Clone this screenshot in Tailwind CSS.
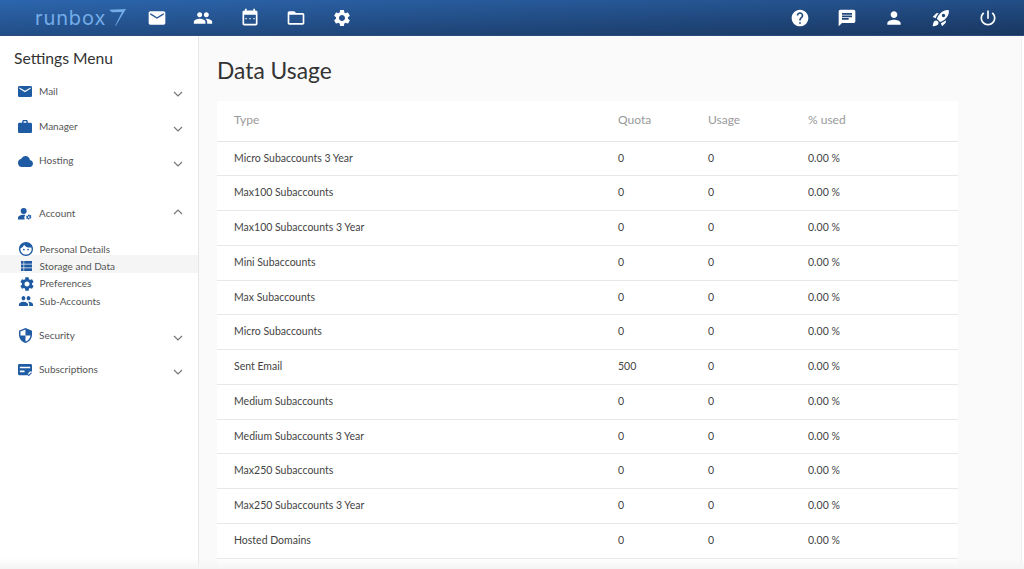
<!DOCTYPE html>
<html lang="en">
<head>
    <meta charset="UTF-8">
    <meta name="viewport" content="width=device-width, initial-scale=1.0">
    <title>Runbox - Data Usage</title>
    <script src="https://cdn.jsdelivr.net/npm/@tailwindcss/browser@4"></script>
</head>
<body class="relative h-[569px] overflow-hidden bg-[#fafafa] font-['Lato','Noto_Sans',sans-serif] text-[#333]">
    <!-- top toolbar -->
    <header class="flex h-[36px] items-center justify-between bg-gradient-to-br from-[#2c66ae] to-[#193761] border-b border-[#2b4d7c]">
        <div class="flex items-center">
            <a href="#" class="ml-[35px] flex w-[112px] items-center">
                <span class="text-[20px] leading-none tracking-[0.9px] text-[#74ace8] font-['Inter','Lato',sans-serif] font-normal">runbox</span>
                <svg class="ml-[3px] h-[17px] w-[17px]" viewBox="0 0 17 17" fill="#74ace8"><path d="M0 .8L17 0 6.6 17l-.5-.2L13 3 3 3.2z"/></svg>
            </a>
            <nav class="flex items-center gap-[26.3px] text-white">
                <svg class="h-[20px] w-[20px]" viewBox="0 0 24 24" fill="currentColor"><path d="M20 4H4c-1.1 0-2 .9-2 2v12c0 1.1.9 2 2 2h16c1.1 0 2-.9 2-2V6c0-1.1-.9-2-2-2zm0 4l-8 5-8-5V6l8 5 8-5v2z"/></svg>
                <svg class="h-[20px] w-[20px]" viewBox="0 0 24 24" fill="currentColor"><path d="M16 11c1.66 0 2.99-1.34 2.99-3S17.66 5 16 5c-1.66 0-3 1.34-3 3s1.34 3 3 3zm-8 0c1.66 0 2.99-1.34 2.99-3S9.66 5 8 5C6.34 5 5 6.34 5 8s1.34 3 3 3zm0 2c-2.33 0-7 1.17-7 3.5V19h14v-2.5c0-2.33-4.67-3.5-7-3.5zm8 0c-.29 0-.62.02-.97.05 1.16.84 1.97 1.97 1.97 3.45V19h6v-2.5c0-2.33-4.67-3.5-7-3.5z"/></svg>
                <svg class="h-[20px] w-[20px]" viewBox="0 0 24 24" fill="currentColor"><path d="M19 3h-1V1h-2v2H8V1H6v2H5c-1.1 0-2 .9-2 2v14c0 1.1.9 2 2 2h14c1.1 0 2-.9 2-2V5c0-1.1-.9-2-2-2zm0 16H5V8h14v11zM8 12H6.5v1.5H8V12zm4.75 0h-1.5v1.5h1.5V12zm4.75 0H16v1.5h1.5V12z"/></svg>
                <svg class="h-[20px] w-[20px]" viewBox="0 0 24 24" fill="currentColor"><path d="M20 6h-8l-2-2H4c-1.1 0-1.99.9-1.99 2L2 18c0 1.1.9 2 2 2h16c1.1 0 2-.9 2-2V8c0-1.1-.9-2-2-2zm0 12H4V8h16v10z"/></svg>
                <svg class="h-[20px] w-[20px]" viewBox="0 0 24 24" fill="currentColor"><path d="M19.14 12.94c.04-.3.06-.61.06-.94 0-.32-.02-.64-.07-.94l2.03-1.58c.18-.14.23-.41.12-.61l-1.92-3.32c-.12-.22-.37-.29-.59-.22l-2.39.96c-.5-.38-1.03-.7-1.62-.94l-.36-2.54c-.04-.24-.24-.41-.48-.41h-3.84c-.24 0-.43.17-.47.41l-.36 2.54c-.59.24-1.13.57-1.62.94l-2.39-.96c-.22-.08-.47 0-.59.22L2.74 8.87c-.12.21-.08.47.12.61l2.03 1.58c-.05.3-.09.63-.09.94s.02.64.07.94l-2.03 1.58c-.18.14-.23.41-.12.61l1.92 3.32c.12.22.37.29.59.22l2.39-.96c.5.38 1.03.7 1.62.94l.36 2.54c.05.24.24.41.48.41h3.84c.24 0 .44-.17.47-.41l.36-2.54c.59-.24 1.13-.56 1.62-.94l2.39.96c.22.08.47 0 .59-.22l1.92-3.32c.12-.22.07-.47-.12-.61l-2.01-1.58zM12 15.6c-1.98 0-3.6-1.62-3.6-3.6s1.62-3.6 3.6-3.6 3.6 1.62 3.6 3.6-1.62 3.6-3.6 3.6z"/></svg>
            </nav>
        </div>
        <div class="mr-[26px] flex items-center gap-[27px] text-white">
            <svg class="-ml-[1px] h-[20px] w-[20px]" viewBox="0 0 24 24" fill="currentColor"><path d="M12 2C6.48 2 2 6.48 2 12s4.48 10 10 10 10-4.48 10-10S17.52 2 12 2zm1 17h-2v-2h2v2zm2.07-7.75l-.9.92C13.45 12.9 13 13.5 13 15h-2v-.5c0-1.1.45-2.1 1.17-2.83l1.24-1.26c.37-.36.59-.86.59-1.41 0-1.1-.9-2-2-2s-2 .9-2 2H8c0-2.21 1.79-4 4-4s4 1.79 4 4c0 .88-.36 1.68-.93 2.25z"/></svg>
            <svg class="h-[20px] w-[20px]" viewBox="0 0 24 24" fill="currentColor"><path d="M20 2H4c-1.1 0-1.99.9-1.99 2L2 22l4-4h14c1.1 0 2-.9 2-2V4c0-1.1-.9-2-2-2zM6 9h12v2H6V9zm8 5H6v-2h8v2zm4-6H6V6h12v2z"/></svg>
            <svg class="h-[20px] w-[20px]" viewBox="0 0 24 24" fill="currentColor"><path d="M12 12c2.21 0 4-1.79 4-4s-1.79-4-4-4-4 1.79-4 4 1.79 4 4 4zm0 2c-2.67 0-8 1.34-8 4v2h16v-2c0-2.66-5.33-4-8-4z"/></svg>
            <svg class="h-[20px] w-[20px]" viewBox="0 0 24 24" fill="currentColor"><path d="M9.19 6.35c-2.04 2.29-3.44 5.58-3.57 5.89L2 10.69l4.05-4.05c.47-.47 1.15-.68 1.81-.55l1.33.26zM11.17 17s3.74-1.55 5.89-3.7c5.4-5.4 4.5-9.62 4.21-10.57-.95-.3-5.17-1.19-10.57 4.21C8.55 9.09 7 12.83 7 12.83L11.17 17zm6.48-2.19c-2.29 2.04-5.58 3.44-5.89 3.57L13.31 22l4.05-4.05c.47-.47.68-1.15.55-1.81l-.26-1.33zM9 18c0 .83-.34 1.58-.88 2.12C6.94 21.3 2 22 2 22s.7-4.94 1.88-6.12C4.42 15.34 5.17 15 6 15c1.66 0 3 1.34 3 3zm4-9c0-1.1.9-2 2-2s2 .9 2 2-.9 2-2 2-2-.9-2-2z"/></svg>
            <svg class="h-[20px] w-[20px]" viewBox="0 0 24 24" fill="currentColor"><path d="M13 3h-2v10h2V3zm4.83 2.17l-1.42 1.42C17.99 7.86 19 9.81 19 12c0 3.87-3.13 7-7 7s-7-3.13-7-7c0-2.19 1.01-4.14 2.58-5.42L6.17 5.17C4.23 6.82 3 9.26 3 12c0 4.97 4.03 9 9 9s9-4.03 9-9c0-2.74-1.23-5.18-3.17-6.83z"/></svg>
        </div>
    </header>

    <div class="flex h-[533px]">
        <!-- settings menu -->
        <aside class="w-[199px] shrink-0 border-r border-[#e6e6e6] bg-white">
            <h2 class="ml-[14px] mt-[12px] h-[20px] text-[15.7px] leading-[20px] text-[#333]">Settings Menu</h2>

            <div class="mt-[16px] flex h-[35px] items-start pl-[18px] pr-[15px] text-[#1f5ba3]">
                <svg class="mt-[2px] h-[11px] w-[14px]" viewBox="2 4 20 16" preserveAspectRatio="none" fill="currentColor"><path d="M20 4H4c-1.1 0-2 .9-2 2v12c0 1.1.9 2 2 2h16c1.1 0 2-.9 2-2V6c0-1.1-.9-2-2-2zm0 4l-8 5-8-5V6l8 5 8-5v2z"/></svg>
                <span class="ml-[7px] flex-1 text-[10px] leading-[14px] text-[#555]">Mail</span>
                <svg class="mt-[5px] h-[10px] w-[10px] text-[#777]" viewBox="0 0 10 10" fill="none" stroke="currentColor" stroke-width="1.2"><path d="M1 3l4 4 4-4"/></svg>
            </div>
            <div class="flex h-[34px] items-start pl-[18px] pr-[15px] text-[#1f5ba3]">
                <svg class="mt-[1px] h-[13px] w-[14px]" viewBox="2 2 20 19" preserveAspectRatio="none" fill="currentColor"><path d="M20 6h-4V4c0-1.11-.89-2-2-2h-4c-1.11 0-2 .89-2 2v2H4c-1.11 0-1.99.89-1.99 2L2 19c0 1.11.89 2 2 2h16c1.11 0 2-.89 2-2V8c0-1.11-.89-2-2-2zm-6 0h-4V4h4v2z"/></svg>
                <span class="ml-[7px] flex-1 text-[10px] leading-[14px] text-[#555]">Manager</span>
                <svg class="mt-[5px] h-[10px] w-[10px] text-[#777]" viewBox="0 0 10 10" fill="none" stroke="currentColor" stroke-width="1.2"><path d="M1 3l4 4 4-4"/></svg>
            </div>
            <div class="flex h-[53px] items-start pl-[17.5px] pr-[15px] text-[#1f5ba3]">
                <svg class="mt-[3px] h-[11px] w-[15px]" viewBox="0 4 24 16" preserveAspectRatio="none" fill="currentColor"><path d="M19.35 10.04C18.67 6.59 15.64 4 12 4 9.11 4 6.6 5.64 5.35 8.04 2.34 8.36 0 10.91 0 14c0 3.31 2.69 6 6 6h13c2.76 0 5-2.24 5-5 0-2.64-2.05-4.78-4.65-4.96z"/></svg>
                <span class="ml-[6.5px] flex-1 text-[10px] leading-[14px] text-[#555]">Hosting</span>
                <svg class="mt-[5.5px] h-[10px] w-[10px] text-[#777]" viewBox="0 0 10 10" fill="none" stroke="currentColor" stroke-width="1.2"><path d="M1 3l4 4 4-4"/></svg>
            </div>
            <div class="flex h-[32px] items-start pl-[18px] pr-[15px] text-[#1f5ba3]">
                <svg class="mt-[2px] h-[12px] w-[14px]" viewBox="0 0 16 14" preserveAspectRatio="none" fill="currentColor"><circle cx="6.5" cy="3.5" r="3.4"/><path d="M0 13.5v-2C0 9.2 3.5 8 6.5 8c.6 0 1.2.05 1.8.15a5 5 0 0 0-.7 5.35z"/><path fill-rule="evenodd" d="M13 7.5l.35 1.25 1.2-.5.8 1.1-.9.9.9.9-.8 1.1-1.2-.5L13 13.5h-1.4l-.35-1.25-1.2.5-.8-1.1.9-.9-.9-.9.8-1.1 1.2.5.35-1.35zm-.7 2.2a.95.95 0 1 0 0 1.9.95.95 0 0 0 0-1.9z"/></svg>
                <span class="ml-[7px] flex-1 text-[10px] leading-[14px] text-[#555]">Account</span>
                <svg class="mt-[1px] h-[10px] w-[10px] text-[#777]" viewBox="0 0 10 10" fill="none" stroke="currentColor" stroke-width="1.2"><path d="M1 7l4-4 4 4"/></svg>
            </div>

            <div class="box-border flex h-[17.3px] items-center pl-[19px] pt-[5px] text-[#1f5ba3]">
                <svg class="h-[14px] w-[14px]" viewBox="2 2 20 20" fill="currentColor"><path d="M9 11.75c-.69 0-1.25.56-1.25 1.25s.56 1.25 1.25 1.25 1.25-.56 1.25-1.25-.56-1.25-1.25-1.25zm6 0c-.69 0-1.25.56-1.25 1.25s.56 1.25 1.25 1.25 1.25-.56 1.25-1.25-.56-1.25-1.25-1.25zM12 2C6.48 2 2 6.48 2 12s4.48 10 10 10 10-4.48 10-10S17.52 2 12 2zm0 18c-4.41 0-8-3.59-8-8 0-.29.02-.58.05-.86 2.36-1.05 4.23-2.98 5.21-5.37C11.07 8.33 14.05 10 17.42 10c.78 0 1.53-.09 2.25-.26.21.71.33 1.47.33 2.26 0 4.41-3.59 8-8 8z"/></svg>
                <span class="ml-[6.5px] text-[10px] text-[#555]">Personal Details</span>
            </div>
            <div class="box-border flex h-[17.3px] items-center bg-[#f5f5f5] pl-[20.5px] pt-[5px] text-[#1f5ba3]">
                <svg class="h-[10px] w-[11.5px]" viewBox="3 5 18 14" preserveAspectRatio="none" fill="currentColor"><path d="M3 14h4v-4H3v4zm0 5h4v-4H3v4zM3 9h4V5H3v4zm5 5h13v-4H8v4zm0 5h13v-4H8v4zM8 5v4h13V5H8z"/></svg>
                <span class="ml-[7.5px] text-[10px] text-[#555]">Storage and Data</span>
            </div>
            <div class="box-border flex h-[17.3px] items-center pl-[19.5px] pt-[5px] text-[#1f5ba3]">
                <svg class="h-[14px] w-[14px]" viewBox="2 2 20 20" fill="currentColor"><path d="M19.14 12.94c.04-.3.06-.61.06-.94 0-.32-.02-.64-.07-.94l2.03-1.58c.18-.14.23-.41.12-.61l-1.92-3.32c-.12-.22-.37-.29-.59-.22l-2.39.96c-.5-.38-1.03-.7-1.62-.94l-.36-2.54c-.04-.24-.24-.41-.48-.41h-3.84c-.24 0-.43.17-.47.41l-.36 2.54c-.59.24-1.13.57-1.62.94l-2.39-.96c-.22-.08-.47 0-.59.22L2.74 8.87c-.12.21-.08.47.12.61l2.03 1.58c-.05.3-.09.63-.09.94s.02.64.07.94l-2.03 1.58c-.18.14-.23.41-.12.61l1.92 3.32c.12.22.37.29.59.22l2.39-.96c.5.38 1.03.7 1.62.94l.36 2.54c.05.24.24.41.48.41h3.84c.24 0 .44-.17.47-.41l.36-2.54c.59-.24 1.13-.56 1.62-.94l2.39.96c.22.08.47 0 .59-.22l1.92-3.32c.12-.22.07-.47-.12-.61l-2.01-1.58zM12 15.6c-1.98 0-3.6-1.62-3.6-3.6s1.62-3.6 3.6-3.6 3.6 1.62 3.6 3.6-1.62 3.6-3.6 3.6z"/></svg>
                <span class="ml-[6px] text-[10px] text-[#555]">Preferences</span>
            </div>
            <div class="box-border flex h-[17.3px] items-center pl-[19px] pt-[5px] text-[#1f5ba3]">
                <svg class="h-[10px] w-[14px]" viewBox="1 5 22 14" preserveAspectRatio="none" fill="currentColor"><path d="M16 11c1.66 0 2.99-1.34 2.99-3S17.66 5 16 5c-1.66 0-3 1.34-3 3s1.34 3 3 3zm-8 0c1.66 0 2.99-1.34 2.99-3S9.66 5 8 5C6.34 5 5 6.34 5 8s1.34 3 3 3zm0 2c-2.33 0-7 1.17-7 3.5V19h14v-2.5c0-2.33-4.67-3.5-7-3.5zm8 0c-.29 0-.62.02-.97.05 1.16.84 1.97 1.97 1.97 3.45V19h6v-2.5c0-2.33-4.67-3.5-7-3.5z"/></svg>
                <span class="ml-[6.5px] text-[10px] text-[#555]">Sub-Accounts</span>
            </div>

            <div class="mt-[20.5px] flex h-[34px] items-start pl-[18.5px] pr-[15px] text-[#1f5ba3]">
                <svg class="h-[15px] w-[13px]" viewBox="3 1 18 22" preserveAspectRatio="none" fill="currentColor"><path d="M12 1L3 5v6c0 5.55 3.84 10.74 9 12 5.16-1.26 9-6.45 9-12V5l-9-4zm0 10.99h7c-.53 4.12-3.28 7.79-7 8.94V12H5V6.3l7-3.11v8.8z"/></svg>
                <span class="ml-[7.5px] flex-1 text-[10px] leading-[14px] text-[#555]">Security</span>
                <svg class="mt-[5.5px] h-[10px] w-[10px] text-[#777]" viewBox="0 0 10 10" fill="none" stroke="currentColor" stroke-width="1.2"><path d="M1 3l4 4 4-4"/></svg>
            </div>
            <div class="flex h-[34.5px] items-start pl-[18px] pr-[15px] text-[#1f5ba3]">
                <svg class="mt-[2px] h-[13px] w-[14px]" viewBox="0 0 15 14" preserveAspectRatio="none" fill="currentColor"><path d="M1.5 0h12A1.5 1.5 0 0 1 15 1.5V8h-2.5L9.5 12H1.5A1.5 1.5 0 0 1 0 10.5v-9A1.5 1.5 0 0 1 1.5 0zM2 3v1.6h11V3zM2 7v2h5V7z" fill-rule="evenodd"/><path d="M9.5 11.2l.8-.8 1.2 1.2 2.6-2.6.8.8-3.4 3.4z"/></svg>
                <span class="ml-[7px] flex-1 text-[10px] leading-[14px] text-[#555]">Subscriptions</span>
                <svg class="mt-[5.5px] h-[10px] w-[10px] text-[#777]" viewBox="0 0 10 10" fill="none" stroke="currentColor" stroke-width="1.2"><path d="M1 3l4 4 4-4"/></svg>
            </div>
        </aside>

        <!-- data usage -->
        <main class="flex-1 overflow-hidden pl-[18px] pt-[19px]">
            <h1 class="h-[30px] text-[22.8px] leading-[30px] text-[#333]">Data Usage</h1>
            <table class="mt-[16px] w-[741px] table-fixed border-collapse bg-white text-[10.5px] text-[#444]">
                <thead class="text-[12px] text-[#999]">
                    <tr class="h-[40px] border-b border-[#e5e5e5] text-left">
                        <th class="w-[401px] pb-[2px] pl-[17px] font-normal">Type</th>
                        <th class="w-[90px] pb-[2px] font-normal">Quota</th>
                        <th class="w-[100px] pb-[2px] font-normal">Usage</th>
                        <th class="pb-[2px] font-normal">% used</th>
                    </tr>
                </thead>
                <tbody>
                    <tr class="h-[34.75px] border-b border-[#e8e8e8]"><td class="pl-[17px]">Micro Subaccounts 3 Year</td><td>0</td><td>0</td><td>0.00 %</td></tr>
                    <tr class="h-[34.75px] border-b border-[#e8e8e8]"><td class="pl-[17px]">Max100 Subaccounts</td><td>0</td><td>0</td><td>0.00 %</td></tr>
                    <tr class="h-[34.75px] border-b border-[#e8e8e8]"><td class="pl-[17px]">Max100 Subaccounts 3 Year</td><td>0</td><td>0</td><td>0.00 %</td></tr>
                    <tr class="h-[34.75px] border-b border-[#e8e8e8]"><td class="pl-[17px]">Mini Subaccounts</td><td>0</td><td>0</td><td>0.00 %</td></tr>
                    <tr class="h-[34.75px] border-b border-[#e8e8e8]"><td class="pl-[17px]">Max Subaccounts</td><td>0</td><td>0</td><td>0.00 %</td></tr>
                    <tr class="h-[34.75px] border-b border-[#e8e8e8]"><td class="pl-[17px]">Micro Subaccounts</td><td>0</td><td>0</td><td>0.00 %</td></tr>
                    <tr class="h-[34.75px] border-b border-[#e8e8e8]"><td class="pl-[17px]">Sent Email</td><td>500</td><td>0</td><td>0.00 %</td></tr>
                    <tr class="h-[34.75px] border-b border-[#e8e8e8]"><td class="pl-[17px]">Medium Subaccounts</td><td>0</td><td>0</td><td>0.00 %</td></tr>
                    <tr class="h-[34.75px] border-b border-[#e8e8e8]"><td class="pl-[17px]">Medium Subaccounts 3 Year</td><td>0</td><td>0</td><td>0.00 %</td></tr>
                    <tr class="h-[34.75px] border-b border-[#e8e8e8]"><td class="pl-[17px]">Max250 Subaccounts</td><td>0</td><td>0</td><td>0.00 %</td></tr>
                    <tr class="h-[34.75px] border-b border-[#e8e8e8]"><td class="pl-[17px]">Max250 Subaccounts 3 Year</td><td>0</td><td>0</td><td>0.00 %</td></tr>
                    <tr class="h-[34.75px] border-b border-[#e8e8e8]"><td class="pl-[17px]">Hosted Domains</td><td>0</td><td>0</td><td>0.00 %</td></tr>
                    <tr class="h-[34.75px]"><td colspan="4"></td></tr>
                </tbody>
            </table>
        </main>
        <div class="w-[3px] shrink-0 border-l border-[#f0f0f0] bg-white"></div>
    </div>
    <!-- soft fade along the bottom edge -->
    <div class="pointer-events-none absolute inset-x-0 bottom-0 h-[11px] bg-gradient-to-b from-transparent to-[#f4f4f4]"></div>
</body>
</html>
